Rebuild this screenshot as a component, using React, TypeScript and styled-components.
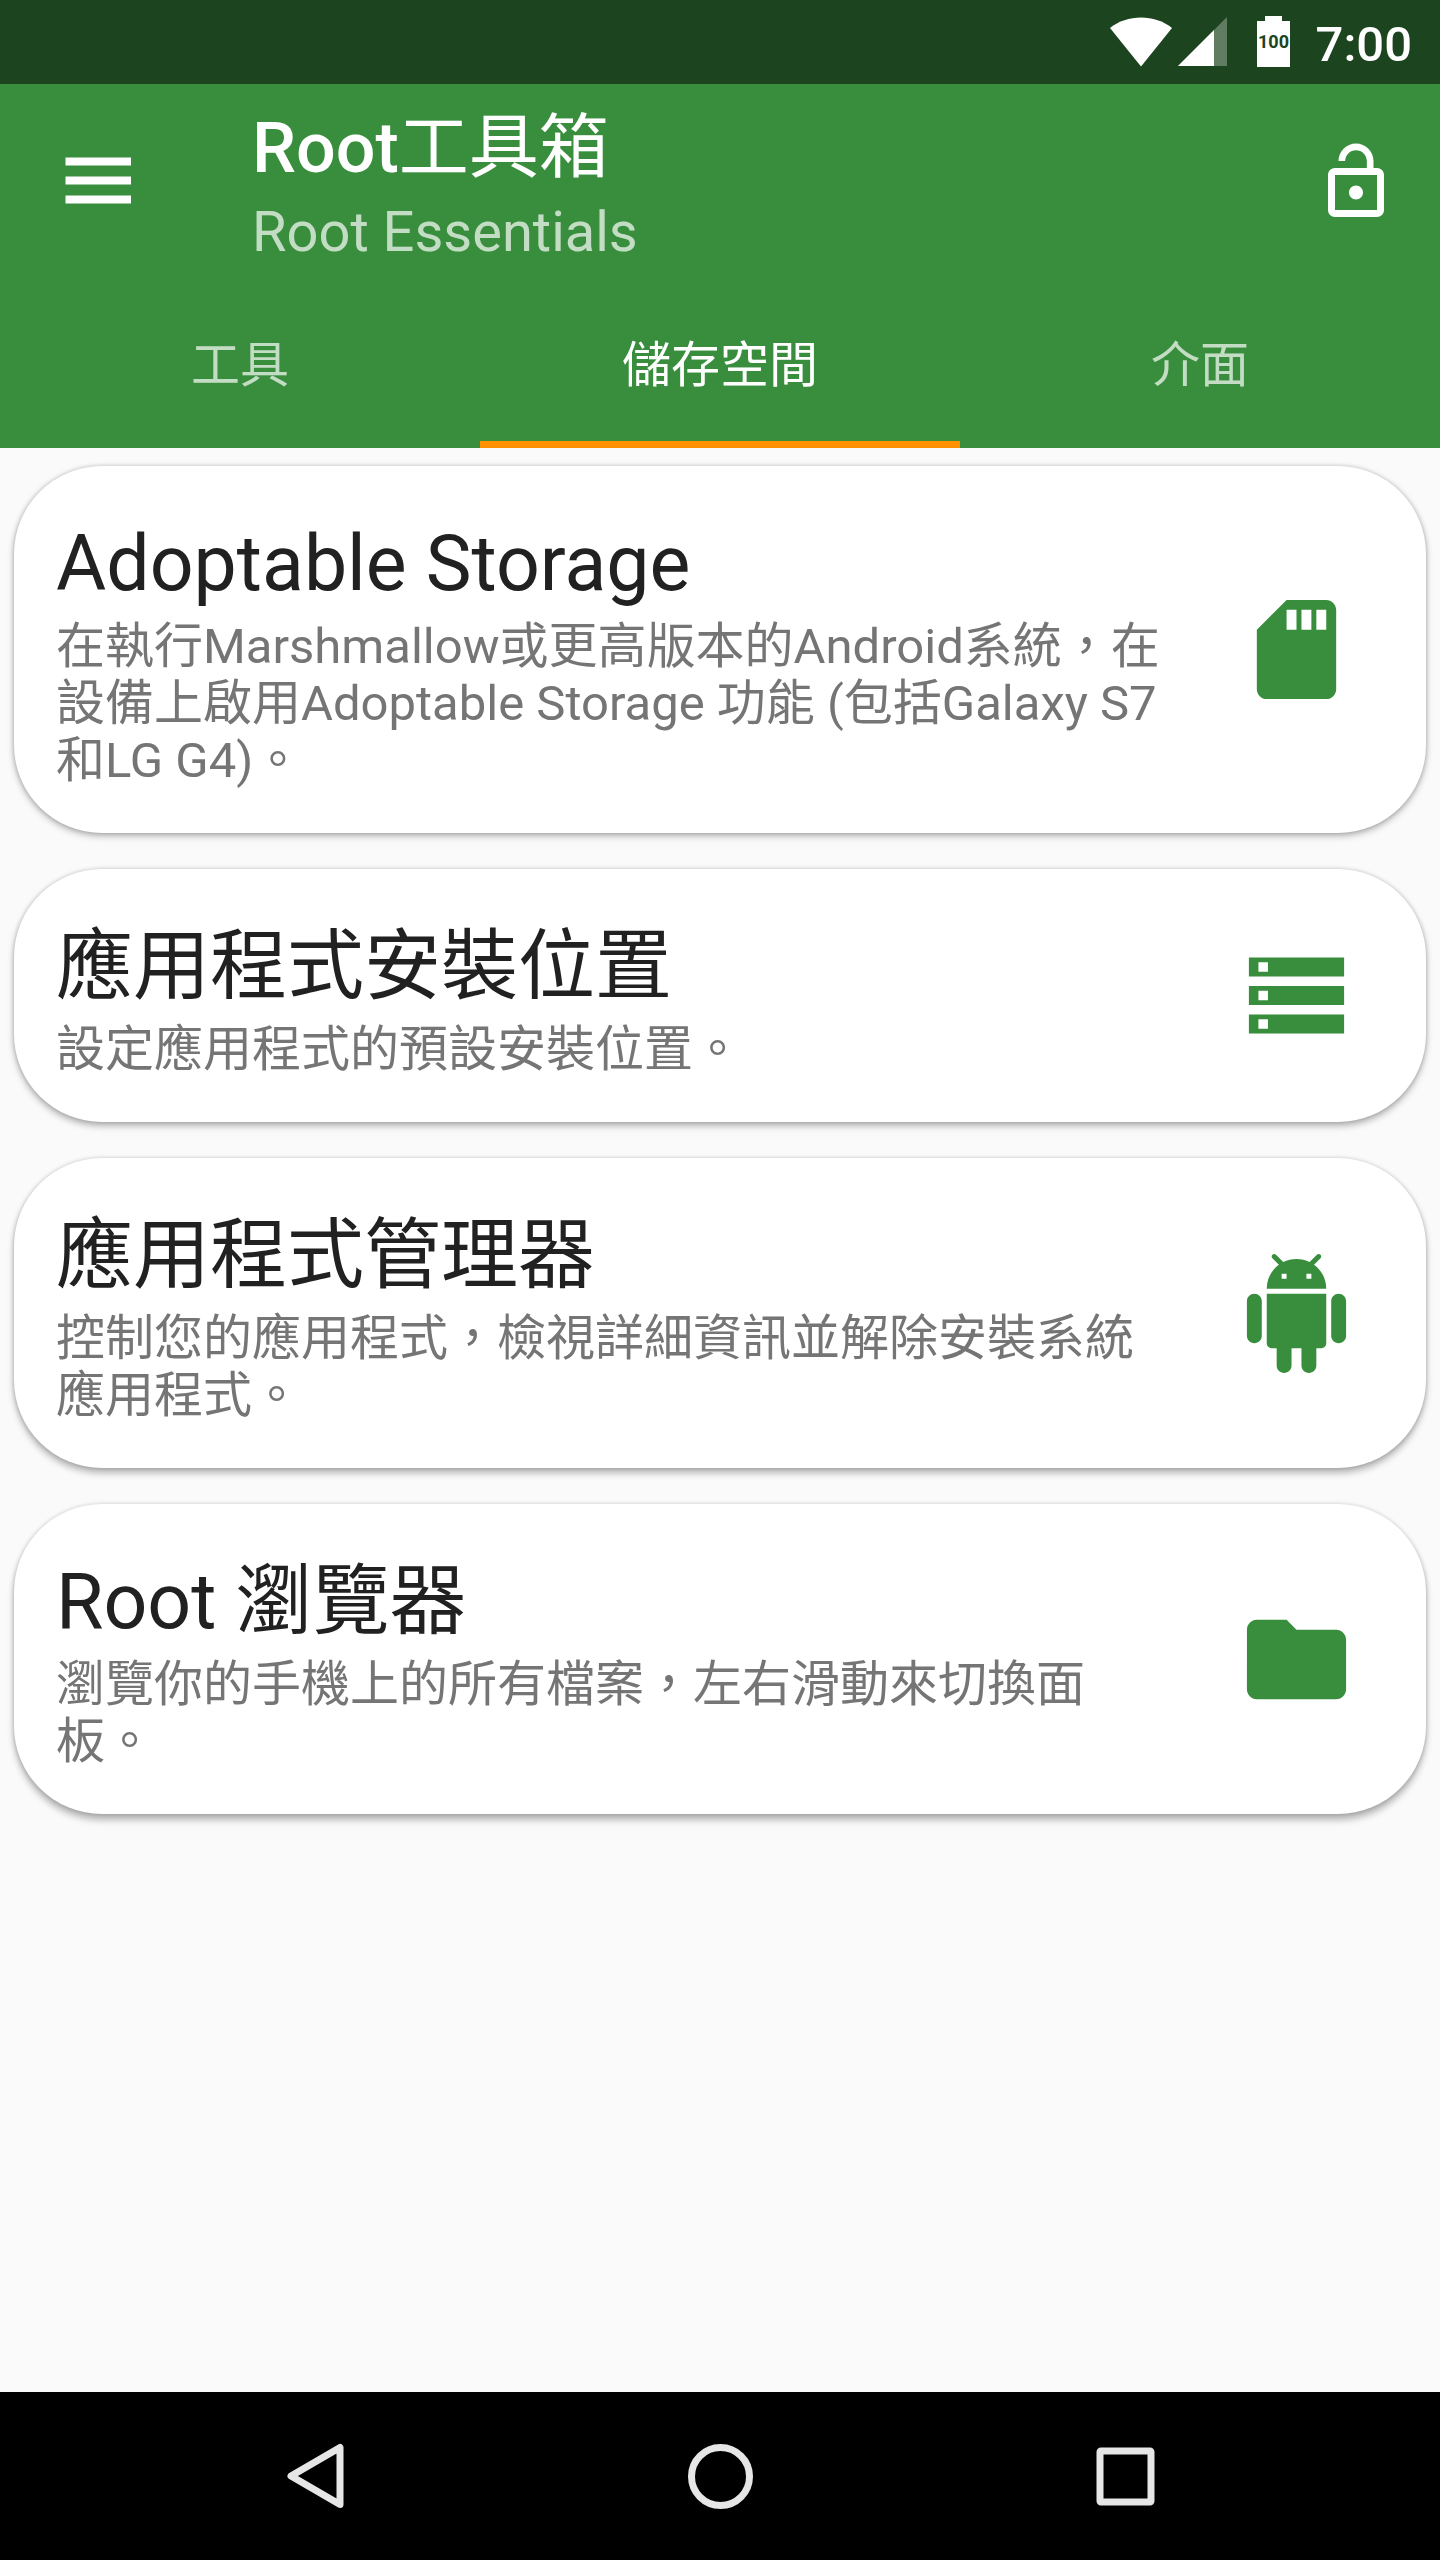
import React, { useState } from "react";
import styled, { createGlobalStyle } from "styled-components";

const colors = {
  primary: "#388e3c",
  statusBar: "#1c441e",
  accent: "#ff9100",
  page: "#fafafa",
  card: "#ffffff",
  title: "#212121",
  body: "#757575",
  nav: "#e6e6e6",
};

const GlobalStyle = createGlobalStyle`
  *, *::before, *::after {
    box-sizing: border-box;
  }
  body {
    margin: 0;
    background: ${colors.page};
    font-family: Roboto, "Noto Sans CJK TC", sans-serif;
  }
  button {
    margin: 0;
    padding: 0;
    border: 0;
    background: none;
    color: inherit;
    font: inherit;
    cursor: pointer;
  }
`;

const Screen = styled.div`
  display: flex;
  flex-direction: column;
  min-height: 100vh;
`;

const StatusBar = styled.div`
  display: flex;
  align-items: center;
  justify-content: flex-end;
  height: 84px;
  padding-right: 28px;
  background: ${colors.statusBar};
  color: #ffffff;
`;

const StatusIcons = styled.svg`
  display: block;
  width: 182px;
  height: 52px;
  margin-right: 24px;
`;

const Clock = styled.time`
  padding-top: 4px;
  font-size: 49px;
  font-weight: 500;
  line-height: 57px;
`;

const AppBar = styled.header`
  background: ${colors.primary};
  color: #ffffff;
`;

const Toolbar = styled.div`
  display: flex;
  align-items: center;
  height: 196px;
  padding: 0 42px 0 56px;
`;

const IconButton = styled.button`
  display: flex;
  flex: none;
  width: 84px;
  height: 84px;

  svg {
    width: 84px;
    height: 84px;
  }
`;

const Heading = styled.div`
  flex: 1;
  align-self: flex-start;
  min-width: 0;
  padding: 22px 0 0 112px;
`;

const AppName = styled.h1`
  margin: 0 0 9px;
  font-size: 70px;
  font-weight: 400;
  line-height: 84px;
`;

const Brand = styled.span`
  font-weight: 500;
`;

const AppSubtitle = styled.p`
  margin: 0;
  color: rgba(255, 255, 255, 0.7);
  font-size: 56px;
  line-height: 66px;
`;

const TabList = styled.div`
  display: grid;
  grid-template-columns: repeat(3, 1fr);
  height: 168px;
`;

const Tab = styled.button<{ $active: boolean }>`
  padding-top: 10px;
  border-bottom: 7px solid
    ${(p) => (p.$active ? colors.accent : "transparent")};
  color: ${(p) => (p.$active ? "#ffffff" : "rgba(255, 255, 255, 0.7)")};
  font-size: 49px;
  line-height: 57px;
`;

const CardList = styled.ul`
  display: flex;
  flex: 1;
  flex-direction: column;
  gap: 36px;
  margin: 0;
  padding: 18px 14px;
  list-style: none;
`;

const Card = styled.li<{ $depth: number }>`
  display: flex;
  align-items: center;
  gap: 70px;
  padding: 0 70px 0 42px;
  border-radius: 88px;
  background: ${colors.card};
  box-shadow:
    0 0 4px rgba(0, 0, 0, 0.18),
    0 ${(p) => p.$depth}px 7px rgba(0, 0, 0, 0.28);
`;

const CardText = styled.div`
  flex: 1;
  min-width: 0;
  padding: 53px 0 44px;
`;

const CardTitle = styled.h2`
  margin: 0 0 9px;
  color: ${colors.title};
  font-size: 77px;
  font-weight: 400;
  line-height: 90px;
`;

const CardBody = styled.p`
  margin: 0;
  color: ${colors.body};
  font-size: 49px;
  line-height: 57px;
`;

const CardIcon = styled.svg`
  display: block;
  flex: none;
  width: 119px;
  height: 119px;
  fill: ${colors.primary};
`;

const NavBar = styled.nav`
  display: grid;
  grid-template-columns: repeat(3, 1fr);
  align-items: center;
  justify-items: center;
  height: 168px;
  padding: 0 112px;
  background: #000000;
`;

const NavButton = styled.button`
  display: flex;

  svg {
    width: 84px;
    height: 84px;
    fill: none;
    stroke: ${colors.nav};
    stroke-width: 7;
    stroke-linejoin: round;
  }
`;

const tabs = ["工具", "儲存空間", "介面"];

const tools = [
  {
    title: "Adoptable Storage",
    body: "在執行Marshmallow或更高版本的Android系統，在設備上啟用Adoptable Storage 功能 (包括Galaxy S7和LG G4)。",
    viewBox: "0 0 24 24",
    path: "M18 2h-8L4 8v12c0 1.1.9 2 2 2h12c1.1 0 2-.9 2-2V4c0-1.1-.9-2-2-2zm-6 6h-2V4h2v4zm3 0h-2V4h2v4zm3 0h-2V4h2v4z",
    depth: 3,
  },
  {
    title: "應用程式安裝位置",
    body: "設定應用程式的預設安裝位置。",
    viewBox: "-0.5 -0.5 25 25",
    path: "M2 20h20v-4H2v4zm2-3h2v2H4v-2zM2 4v4h20V4H2zm4 3H4V5h2v2zm-4 7h20v-4H2v4zm2-3h2v2H4v-2z",
    depth: 4,
  },
  {
    title: "應用程式管理器",
    body: "控制您的應用程式，檢視詳細資訊並解除安裝系統應用程式。",
    viewBox: "0 0 24 24",
    path: "M6 18c0 .55.45 1 1 1h1v3.5c0 .83.67 1.5 1.5 1.5s1.5-.67 1.5-1.5V19h2v3.5c0 .83.67 1.5 1.5 1.5s1.5-.67 1.5-1.5V19h1c.55 0 1-.45 1-1V8H6v10zM3.5 8C2.67 8 2 8.67 2 9.5v7c0 .83.67 1.5 1.5 1.5S5 17.33 5 16.5v-7C5 8.67 4.33 8 3.5 8zm17 0c-.83 0-1.5.67-1.5 1.5v7c0 .83.67 1.5 1.5 1.5s1.5-.67 1.5-1.5v-7c0-.83-.67-1.5-1.5-1.5zm-4.97-5.84l1.3-1.3c.2-.2.2-.51 0-.71-.2-.2-.51-.2-.71 0l-1.48 1.48C13.85 1.23 12.95 1 12 1c-.96 0-1.86.23-2.66.63L7.85.15c-.2-.2-.51-.2-.71 0-.2.2-.2.51 0 .71l1.31 1.31C6.97 3.26 6 5.01 6 7h12c0-1.99-.97-3.75-2.47-4.84zM10 5H9V4h1v1zm5 0h-1V4h1v1z",
    depth: 5,
  },
  {
    title: "Root 瀏覽器",
    body: "瀏覽你的手機上的所有檔案，左右滑動來切換面板。",
    viewBox: "0 0 24 24",
    path: "M10 4H4c-1.1 0-1.99.9-1.99 2L2 18c0 1.1.9 2 2 2h16c1.1 0 2-.9 2-2V8c0-1.1-.9-2-2-2h-8l-2-2z",
    depth: 6,
  },
];

export default function App() {
  const [active, setActive] = useState(1);

  return (
    <Screen lang="zh-Hant">
      <GlobalStyle />
      <StatusBar>
        <StatusIcons viewBox="0 0 182 52" aria-hidden="true">
          <path d="M0 12C17 -2 45 -2 62 12L31 50.500Z" fill="#fff" />
          <path d="M117 1V50H68Z" fill="#fff" fillOpacity="0.3" />
          <path d="M104 14V50H68Z" fill="#fff" />
          <path d="M155 0h17v5h8v46h-33V5h8z" fill="#fff" />
          <text
            x="163.500"
            y="32"
            textAnchor="middle"
            fontFamily="Roboto, sans-serif"
            fontSize="18"
            fontWeight="700"
            fill={colors.statusBar}
          >
            100
          </text>
        </StatusIcons>
        <Clock>7:00</Clock>
      </StatusBar>

      <AppBar>
        <Toolbar>
          <IconButton type="button" aria-label="選單">
            <svg viewBox="0 0 84 84" fill="currentColor" aria-hidden="true">
              <path d="M9.500 17.500h65.500v8H9.500zM9.500 36.500h65.500v8H9.500zM9.500 55.500h65.500v8H9.500z" />
            </svg>
          </IconButton>
          <Heading>
            <AppName>
              <Brand>Root</Brand>工具箱
            </AppName>
            <AppSubtitle>Root Essentials</AppSubtitle>
          </Heading>
          <IconButton type="button" aria-label="解鎖">
            <svg viewBox="0 0 24 24" fill="currentColor" aria-hidden="true">
              <path d="M12 17c1.1 0 2-.9 2-2s-.9-2-2-2-2 .9-2 2 .9 2 2 2zm6-9h-1V6c0-2.76-2.24-5-5-5S7 3.240 7 6h1.900c0-1.710 1.390-3.100 3.100-3.100 1.710 0 3.100 1.390 3.100 3.100v2H6c-1.100 0-2 .9-2 2v10c0 1.100.9 2 2 2h12c1.100 0 2-.9 2-2V10c0-1.100-.9-2-2-2zm0 12H6V10h12v10z" />
            </svg>
          </IconButton>
        </Toolbar>
        <TabList role="tablist">
          {tabs.map((label, i) => (
            <Tab
              key={label}
              type="button"
              role="tab"
              aria-selected={i === active}
              $active={i === active}
              onClick={() => setActive(i)}
            >
              {label}
            </Tab>
          ))}
        </TabList>
      </AppBar>

      <CardList>
        {tools.map((tool) => (
          <Card key={tool.title} $depth={tool.depth}>
            <CardText>
              <CardTitle>{tool.title}</CardTitle>
              <CardBody>{tool.body}</CardBody>
            </CardText>
            <CardIcon viewBox={tool.viewBox} aria-hidden="true">
              <path d={tool.path} />
            </CardIcon>
          </Card>
        ))}
      </CardList>

      <NavBar>
        <NavButton type="button" aria-label="返回">
          <svg viewBox="0 0 84 84">
            <path d="M67 13.500V70.500L18 42Z" />
          </svg>
        </NavButton>
        <NavButton type="button" aria-label="主畫面">
          <svg viewBox="0 0 84 84">
            <circle cx="42.500" cy="42.500" r="29" />
          </svg>
        </NavButton>
        <NavButton type="button" aria-label="最近使用">
          <svg viewBox="0 0 84 84">
            <rect x="17" y="17" width="51" height="51" rx="1" />
          </svg>
        </NavButton>
      </NavBar>
    </Screen>
  );
}
